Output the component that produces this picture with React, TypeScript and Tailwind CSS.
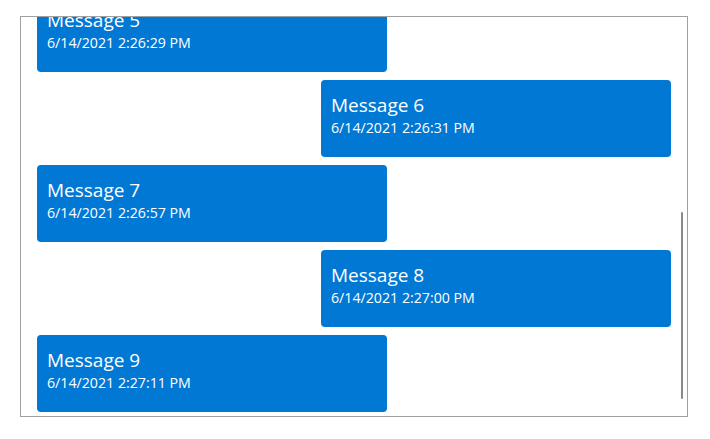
import React from "react";

const messages = [
  { title: "Message 5", time: "6/14/2021 2:26:29 PM", right: false },
  { title: "Message 6", time: "6/14/2021 2:26:31 PM", right: true },
  { title: "Message 7", time: "6/14/2021 2:26:57 PM", right: false },
  { title: "Message 8", time: "6/14/2021 2:27:00 PM", right: true },
  { title: "Message 9", time: "6/14/2021 2:27:11 PM", right: false },
];

export default function App() {
  return (
    <div
      className="w-[710px] h-[439px] bg-white pl-[20px] pt-[16px]"
      style={{ fontFamily: '"Open Sans", "Noto Sans", sans-serif' }}
    >
      <div className="relative w-[668px] h-[401px] border border-[#a0a0a0] overflow-hidden">
        <div className="flex flex-col gap-[8px] px-[16px] mt-[-22px]">
          {messages.map((m) => (
            <div
              key={m.title}
              className={`w-[350px] h-[77px] rounded-[4px] bg-[#0078d4] text-white px-[10px] pt-[12px] ${
                m.right ? "self-end" : "self-start"
              }`}
            >
              <div className="text-[19px] leading-[26px]">{m.title}</div>
              <div className="text-[14.2px] leading-[20px]">{m.time}</div>
            </div>
          ))}
        </div>
        <div className="absolute right-[4px] top-[195px] w-[2px] h-[187px] rounded-full bg-[#8a8a8a]" />
      </div>
    </div>
  );
}
